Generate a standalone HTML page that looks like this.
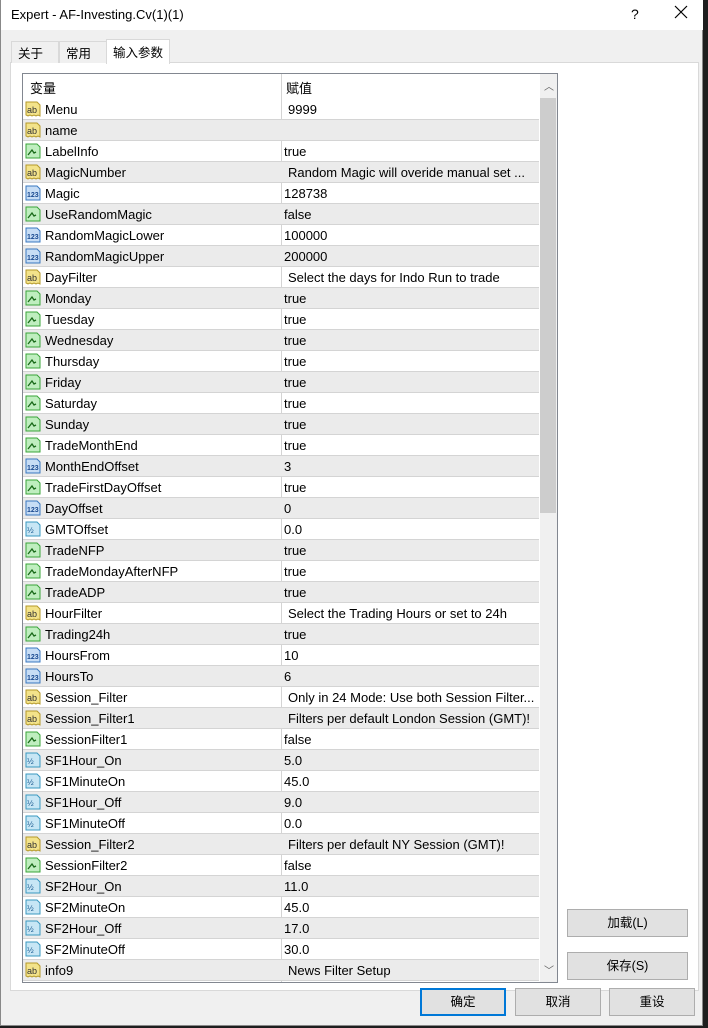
<!DOCTYPE html>
<html><head><meta charset="utf-8"><style>
*{box-sizing:border-box;margin:0;padding:0}
body{width:708px;height:1028px;background:#1e1e1e;font-family:"Liberation Sans","Noto Sans CJK SC",sans-serif;font-size:13px;color:#000;position:relative;overflow:hidden}
#win{position:absolute;left:0;top:0;width:703px;height:1026px;background:#f0f0f0;border:1px solid #888;border-top:none}
#title{position:absolute;left:0;top:0;width:702px;height:30px;background:#fff;font-size:13px}
#title .t{position:absolute;left:10px;top:7px}
#title .q{position:absolute;left:630px;top:6px;font-size:14px}
#title .x{position:absolute;left:673px;top:5px}
.tab{position:absolute;top:41px;height:22px;border:1px solid #d9d9d9;border-bottom:none;background:#f0f0f0;font-size:12.5px;padding:1px 0 0 6px}
#panel{position:absolute;left:9px;top:62px;width:689px;height:929px;background:#fff;border:1px solid #d9d9d9}
#tbl{position:absolute;left:21px;top:73px;width:536px;height:910px;border:1px solid #828790;background:#fff;overflow:hidden}
.hdr{position:absolute;left:0;top:0;width:516px;height:25px;background:#fff}
.hdr span{position:absolute;top:4px}
.row{position:absolute;left:0;width:516px;height:21px;border-bottom:1px solid #d4d4d4}
.row.g{background:#ebebeb}
.row .n{position:absolute;left:22px;top:3px}
.row .v{position:absolute;left:261px;top:3px}
.row .v.s{left:265px}
.row svg{position:absolute;left:2px;top:2px}
.col{position:absolute;left:258px;top:0;width:1px;height:910px;background:#d4d4d4}
#sb{position:absolute;left:517px;top:0;width:17px;height:908px;background:#f0f0f0}
#thumb{position:absolute;left:517px;top:24px;width:16px;height:415px;background:#cdcdcd}
.btn{position:absolute;height:28px;background:#e1e1e1;border:1px solid #adadad;text-align:center;line-height:26px;font-size:12.5px}
</style></head><body>
<div id="win">
<div id="title"><span class="t">Expert - AF-Investing.Cv(1)(1)</span><span class="q">?</span><svg class="x" width="14" height="14"><path d="M1 1L13 13M13 1L1 13" stroke="#000" stroke-width="1.2"/></svg></div>
<div id="panel"></div>
<div class="tab" style="left:10px;width:48px">关于</div>
<div class="tab" style="left:58px;width:48px">常用</div>
<div class="tab" style="left:105px;top:39px;height:25px;width:64px;background:#fff;padding-top:2px">输入参数</div>
<div id="tbl">
<div class="hdr"><span style="left:7px">变量</span><span style="left:263px">赋值</span></div>
<div class="col"></div>
<div id="rows"></div>
<div id="sb"><div style="position:absolute;left:4px;top:4px;font-size:10px;color:#606060">︿</div><div style="position:absolute;left:4px;top:888px;font-size:10px;color:#606060">﹀</div></div>
<div id="thumb"></div>
</div>
<div class="btn" style="left:566px;top:909px;width:121px">加载(L)</div>
<div class="btn" style="left:566px;top:952px;width:121px">保存(S)</div>
<div class="btn" style="left:419px;top:988px;width:86px;border:2px solid #0078d7;line-height:24px">确定</div>
<div class="btn" style="left:514px;top:988px;width:86px">取消</div>
<div class="btn" style="left:608px;top:988px;width:86px">重设</div>
</div>
<script>
var d=[["a","Menu","9999",1],["a","name","",1],["b","LabelInfo","true"],["a","MagicNumber","Random Magic will overide manual set ...",1],["n","Magic","128738"],["b","UseRandomMagic","false"],["n","RandomMagicLower","100000"],["n","RandomMagicUpper","200000"],["a","DayFilter","Select the days for Indo Run to trade",1],["b","Monday","true"],["b","Tuesday","true"],["b","Wednesday","true"],["b","Thursday","true"],["b","Friday","true"],["b","Saturday","true"],["b","Sunday","true"],["b","TradeMonthEnd","true"],["n","MonthEndOffset","3"],["b","TradeFirstDayOffset","true"],["n","DayOffset","0"],["f","GMTOffset","0.0"],["b","TradeNFP","true"],["b","TradeMondayAfterNFP","true"],["b","TradeADP","true"],["a","HourFilter","Select the Trading Hours or set to 24h",1],["b","Trading24h","true"],["n","HoursFrom","10"],["n","HoursTo","6"],["a","Session_Filter","Only in 24 Mode: Use both Session Filter...",1],["a","Session_Filter1","Filters per default London Session (GMT)!",1],["b","SessionFilter1","false"],["f","SF1Hour_On","5.0"],["f","SF1MinuteOn","45.0"],["f","SF1Hour_Off","9.0"],["f","SF1MinuteOff","0.0"],["a","Session_Filter2","Filters per default NY Session (GMT)!",1],["b","SessionFilter2","false"],["f","SF2Hour_On","11.0"],["f","SF2MinuteOn","45.0"],["f","SF2Hour_Off","17.0"],["f","SF2MinuteOff","30.0"],["a","info9","News Filter Setup",1]];
var ic={a:'<svg width="16" height="16"><path d="M1 1h11l3 3v11l-2-1-2 1-2-1-2 1-2-1-2 1-2-1z" fill="#f3e38a" stroke="#b59a2a"/><text x="2" y="12" font-size="9" font-family="Liberation Sans" fill="#333">ab</text></svg>',
b:'<svg width="16" height="16"><path d="M1 1h11l3 3v11H1z" fill="#bfeebf" stroke="#3aa43a"/><path d="M3 12l4-5 2 3 2-1" fill="none" stroke="#1a6a1a" stroke-width="1.3"/></svg>',
n:'<svg width="16" height="16"><path d="M1 1h11l3 3v11H1z" fill="#c7ddf5" stroke="#3a78c0"/><text x="2" y="12" font-size="7" font-family="Liberation Sans" font-weight="bold" fill="#1a4a90">123</text></svg>',
f:'<svg width="16" height="16"><path d="M1 1h11l3 3v11H1z" fill="#c7e6f5" stroke="#3a98c0"/><text x="2" y="12" font-size="8" font-family="Liberation Sans" fill="#1a5a90">½</text></svg>'};
var h='';d.forEach(function(r,i){h+='<div class="row'+(i%2?' g':'')+'" style="top:'+(25+21*i)+'px">'+ic[r[0]]+'<span class="n">'+r[1]+'</span><span class="v'+(r[3]?' s':'')+'">'+r[2]+'</span></div>'});
document.getElementById('rows').innerHTML=h;
</script>
</body></html>
